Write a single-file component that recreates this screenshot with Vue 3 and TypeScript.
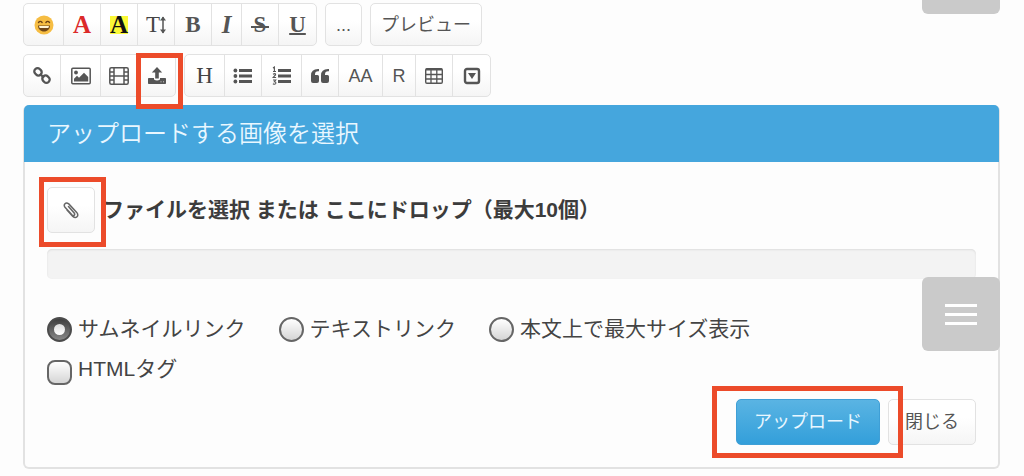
<script setup lang="ts">
import { ref } from 'vue'

type Size = 'slim' | 'small' | 'mid' | 'large' | 'wide'

interface Tool {
  id: string
  label: string
  size: Size
  text?: string
  marked?: boolean
}

const textTools: Tool[] = [
  { id: 'emoji', label: '絵文字', size: 'large' },
  { id: 'color', label: '文字色', size: 'mid', text: 'A' },
  { id: 'marker', label: '背景色', size: 'mid', text: 'A' },
  { id: 'size', label: '文字サイズ', size: 'mid', text: 'T' },
  { id: 'bold', label: '太字', size: 'mid', text: 'B' },
  { id: 'italic', label: '斜体', size: 'slim', text: 'I' },
  { id: 'strike', label: '取り消し線', size: 'mid', text: 'S' },
  { id: 'underline', label: '下線', size: 'mid', text: 'U' },
]

const insertTools: Tool[] = [
  { id: 'link', label: 'リンク', size: 'mid' },
  { id: 'image', label: '画像', size: 'large' },
  { id: 'film', label: '動画', size: 'mid' },
  { id: 'upload', label: 'アップロード', size: 'mid', marked: true },
]

const blockTools: Tool[] = [
  { id: 'heading', label: '見出し', size: 'large', text: 'H' },
  { id: 'list', label: 'リスト', size: 'mid' },
  { id: 'numbers', label: '番号付きリスト', size: 'large' },
  { id: 'quote', label: '引用', size: 'mid' },
  { id: 'aa', label: 'アスキーアート', size: 'wide', text: 'AA' },
  { id: 'ruby', label: 'ルビ', size: 'small', text: 'R' },
  { id: 'table', label: '表', size: 'mid' },
  { id: 'fold', label: '折りたたみ', size: 'mid' },
]

const rows = [[textTools], [insertTools, blockTools]]

const modes = [
  { value: 'thumb', label: 'サムネイルリンク' },
  { value: 'text', label: 'テキストリンク' },
  { value: 'full', label: '本文上で最大サイズ表示' },
]

const mode = ref('thumb')
const htmlTag = ref(false)
</script>

<template>
  <main class="page">
    <div class="toolbars">
      <div v-for="(row, r) in rows" :key="r" class="toolbar">
        <div v-for="(group, g) in row" :key="g" class="group">
          <button
            v-for="tool in group"
            :key="tool.id"
            type="button"
            class="tool"
            :class="[tool.size, tool.id]"
            :aria-label="tool.label"
          >
            <span v-if="tool.text" class="glyph">{{ tool.text }}</span>
            <svg v-if="tool.id === 'size'" class="arrow" viewBox="0 0 6 18" aria-hidden="true">
              <path d="M3 1v16" stroke="#555" stroke-width="1.5" />
              <path d="M0 4.5L3 .5l3 4zM0 13.5l3 4 3-4z" fill="#555" />
            </svg>
            <svg v-else-if="tool.id === 'emoji'" class="icon" viewBox="0 0 20 20" aria-hidden="true">
              <circle cx="10" cy="10" r="9.5" fill="#f6bd43" />
              <path d="M4.5 7.5q1.8-2.3 3.6 0M11.9 7.5q1.8-2.3 3.6 0" fill="none" stroke="#6b4217" stroke-width="1.4" stroke-linecap="round" />
              <path d="M4 10.5h12c0 3.6-2.6 6-6 6s-6-2.4-6-6z" fill="#704719" />
              <path d="M5 11h10l-.6 2H5.6z" fill="#fff3d5" />
            </svg>
            <svg v-else-if="tool.id === 'link'" class="icon" viewBox="0 0 20 20" aria-hidden="true">
              <g fill="none" stroke="#555" stroke-width="2.3">
                <rect x="2.2" y="2.6" width="7.6" height="6.4" rx="3" transform="rotate(45 6 5.8)" />
                <rect x="10.2" y="10" width="7.6" height="6.4" rx="3" transform="rotate(45 14 13.2)" />
                <path d="M8 8l4 3.6" />
              </g>
            </svg>
            <svg v-else-if="tool.id === 'image'" class="icon" viewBox="0 0 20 20" aria-hidden="true">
              <rect x="0.8" y="2.3" width="18.4" height="15.4" rx="1" fill="none" stroke="#555" stroke-width="1.5" />
              <circle cx="5" cy="6.5" r="1.9" fill="#555" />
              <path d="M3 15.5v-2.7l3-3 2 2 5-5 4.2 4.2v4.5z" fill="#555" />
            </svg>
            <svg v-else-if="tool.id === 'film'" class="icon" viewBox="0 0 20 20" aria-hidden="true">
              <g fill="none" stroke="#555" stroke-width="1.5">
                <rect x="0.8" y="1.8" width="18.4" height="16.4" rx="1.5" />
                <path d="M5 2v16M15 2v16M5 10h10M1 6h4M1 10h4M1 14h4M15 6h4M15 10h4M15 14h4" />
              </g>
            </svg>
            <svg v-else-if="tool.id === 'upload'" class="icon" viewBox="0 0 20 20" aria-hidden="true">
              <path d="M10 1l5.2 5.5h-3.4v6H8.2v-6H4.8z" fill="#555" />
              <path d="M1.8 12H7v1.6q3 1.8 6 0V12h5.2q.8 0 .8.8v4.4q0 .8-.8.8H1.8q-.8 0-.8-.8v-4.4q0-.8.8-.8z" fill="#555" />
              <path d="M13.5 15.8h1M16 15.8h1" stroke="#ccc" stroke-width="1" />
            </svg>
            <svg v-else-if="tool.id === 'list'" class="icon" viewBox="0 0 20 20" aria-hidden="true">
              <path d="M6 4.5h13M6 10h13M6 15.5h13" stroke="#555" stroke-width="2.8" />
              <g fill="#555"><circle cx="2.4" cy="4.5" r="1.9" /><circle cx="2.4" cy="10" r="1.9" /><circle cx="2.4" cy="15.5" r="1.9" /></g>
            </svg>
            <svg v-else-if="tool.id === 'numbers'" class="icon" viewBox="0 0 20 20" aria-hidden="true">
              <path d="M6 4.5h13M6 10h13M6 15.5h13" stroke="#555" stroke-width="2.8" />
              <path d="M1 2l1.4-1v4.5M1 5.5h3M1 8.3q2.6-1.6 2.6.4L1.2 11.5h2.9M1 14h2.7l-1.4 1.7q2 .2 1.4 1.8-.8 1.3-2.8.3" fill="none" stroke="#555" stroke-width="1.1" />
            </svg>
            <svg v-else-if="tool.id === 'quote'" class="icon" viewBox="0 0 20 20" aria-hidden="true">
              <path d="M9 3v2.2H8q-3 0-3 3V9h2.5Q9 9 9 10.5V15q0 2-2 2H3q-2 0-2-2V9.5Q1 3 8 3z" fill="#555" />
              <path d="M19 3v2.2h-1q-3 0-3 3V9h2.5Q19 9 19 10.5V15q0 2-2 2h-4q-2 0-2-2V9.5Q11 3 18 3z" fill="#555" />
            </svg>
            <svg v-else-if="tool.id === 'table'" class="icon" viewBox="0 0 20 20" aria-hidden="true">
              <rect x="1.7" y="2.7" width="16.6" height="14.6" rx="1.2" fill="none" stroke="#555" stroke-width="1.4" />
              <path d="M2 3.5h16" stroke="#555" stroke-width="2" />
              <path d="M2 8.5h16M2 13h16M7 4v13M12.8 4v13" stroke="#555" stroke-width="1.3" />
            </svg>
            <svg v-else-if="tool.id === 'fold'" class="icon" viewBox="0 0 20 20" aria-hidden="true">
              <rect x="3" y="3" width="14" height="14" rx="2" fill="none" stroke="#555" stroke-width="2.4" />
              <path d="M6 7h8l-4 6z" fill="#555" />
            </svg>
            <span v-if="tool.marked" class="mark mark-tool"></span>
          </button>
        </div>
        <template v-if="r === 0">
          <button type="button" class="button more">...</button>
          <button type="button" class="button preview">プレビュー</button>
        </template>
      </div>
    </div>

    <section class="panel">
      <h1 class="title">アップロードする画像を選択</h1>
      <div class="body">
        <div class="picker">
          <button type="button" class="button clip" aria-label="ファイルを選択">
            <svg class="clip-icon" viewBox="0 0 18 18" aria-hidden="true">
              <path d="M6.5 5.5l5.7 6.5q1 1.5 0 2.3t-2.1-.3L3 6.2Q1.5 4.2 3 2.7t3.8.2l7.9 8.5q2 2.6.3 4.3t-4.2-.2L5 9" fill="none" stroke="#666" stroke-width="1.5" stroke-linecap="round" />
            </svg>
            <span class="mark mark-clip"></span>
          </button>
          <strong class="drop">ファイルを選択 または ここにドロップ（最大10個）</strong>
        </div>
        <div class="progress" role="progressbar" aria-label="アップロードの進行状況" aria-valuenow="0"></div>
        <div class="options">
          <label v-for="item in modes" :key="item.value" class="option">
            <input v-model="mode" type="radio" name="mode" :value="item.value" class="radio" />
            <span>{{ item.label }}</span>
          </label>
        </div>
        <label class="option html">
          <input v-model="htmlTag" type="checkbox" class="check" />
          <span>HTMLタグ</span>
        </label>
        <div class="actions">
          <button type="button" class="button submit">
            アップロード
            <span class="mark mark-submit"></span>
          </button>
          <button type="button" class="button close">閉じる</button>
        </div>
      </div>
    </section>

    <button type="button" class="float float-top" aria-label="上へ"></button>
    <button type="button" class="float float-menu" aria-label="メニュー">
      <span class="bar"></span>
      <span class="bar"></span>
      <span class="bar"></span>
    </button>
  </main>
</template>

<style>
body {
  background: #fdfdfd;
}
</style>

<style scoped>
.page {
  position: relative;
  box-sizing: border-box;
  padding: 3px 24px 7px 23px;
  font-family: "Liberation Sans", "Noto Sans CJK JP", sans-serif;
  color: #444;
}

.page *,
.page *::before {
  box-sizing: border-box;
}

button {
  font: inherit;
  color: #555;
  padding: 0;
}

.toolbars {
  display: flex;
  flex-direction: column;
  gap: 8px;
}

.toolbar {
  display: flex;
  gap: 8px;
}

.group {
  display: flex;
  height: 43px;
  border: 1px solid #e2e2e2;
  border-radius: 5px;
  background: linear-gradient(#fff 40%, #f5f5f5);
}

.tool {
  position: relative;
  display: flex;
  align-items: center;
  justify-content: center;
  border: 0;
  border-right: 1px solid #e2e2e2;
  background: transparent;
  font-family: "Liberation Serif", serif;
  font-size: 25px;
  line-height: 28px;
}

.tool:last-child {
  border-right: 0;
}

.slim { width: 30px; }
.small { width: 33px; }
.mid { width: 37px; }
.large { width: 40px; }
.wide { width: 44px; }

.icon {
  width: 20px;
  height: 20px;
}

.arrow {
  width: 6px;
  height: 18px;
}

.color,
.marker,
.bold,
.italic,
.underline,
.strike {
  font-weight: bold;
}

.size,
.heading,
.strike,
.underline,
.bold {
  font-size: 23px;
}

.size,
.heading {
  color: #444;
}

.color {
  color: #dc2a2a;
}

.marker {
  color: #111;
}

.marker .glyph {
  background: #fbf836;
  height: 18px;
  line-height: 18px;
}

.italic {
  font-style: italic;
}

.strike .glyph {
  padding: 0 3px;
  background: linear-gradient(#555, #555) center 15px / 100% 2px no-repeat;
}

.underline .glyph {
  text-decoration: underline 2px;
}

.aa,
.ruby {
  font-family: "Liberation Sans", sans-serif;
  font-size: 18px;
}

.button {
  position: relative;
  border: 1px solid #e2e2e2;
  border-radius: 5px;
  background: linear-gradient(#fff 40%, #f5f5f5);
  font-size: 18px;
  line-height: 24px;
}

.more,
.preview {
  padding: 0 10px;
}

.mark {
  position: absolute;
  z-index: 2;
  border: 5px solid #ec4b2a;
  pointer-events: none;
}

.mark-tool {
  inset: -2px -8px -13px -2px;
}

.mark-clip {
  inset: -11px -12px -15px -9px;
}

.mark-submit {
  inset: -14px -24px -14px -25px;
}

.panel {
  margin-top: 8px;
  border: 2px solid #e2e2e2;
  border-top: 0;
  border-radius: 6px;
}

.title {
  margin: 0 -1px;
  padding: 11px 23px;
  border-radius: 5px 5px 0 0;
  background: #45a6dd;
  color: #e9f7ff;
  font-size: 24px;
  font-weight: 350;
  line-height: 35px;
}

.body {
  padding: 25px 22px 22px;
}

.picker {
  display: flex;
  align-items: center;
  gap: 8px;
}

.clip {
  display: flex;
  align-items: center;
  justify-content: center;
  width: 48px;
  height: 46px;
}

.clip-icon {
  width: 18px;
  height: 18px;
}

.drop {
  font-size: 21px;
  line-height: 32px;
  color: #3c3c3c;
}

.progress {
  height: 30px;
  margin-top: 16px;
  border-radius: 5px;
  background: #f3f3f3;
  box-shadow: inset 0 1px 2px #ddd;
}

.options {
  display: flex;
  flex-wrap: wrap;
  gap: 33px;
  margin-top: 34px;
}

.option {
  display: flex;
  align-items: center;
  gap: 6px;
  font-size: 21px;
  line-height: 32px;
}

.radio,
.check {
  appearance: none;
  display: grid;
  place-items: center;
  width: 25px;
  height: 25px;
  margin: 0;
  border: 2px solid #666;
  background: linear-gradient(#fff, #d5d5d5);
}

.radio {
  border-radius: 50%;
}

.check {
  align-self: flex-end;
  border-radius: 8px;
}

.radio:checked {
  border-color: #4c4c4c;
  background: linear-gradient(#3f3f3f, #888);
}

.radio:checked::before {
  content: "";
  width: 11px;
  height: 11px;
  border-radius: 50%;
  background: linear-gradient(#ddd, #fff);
}

.html {
  width: max-content;
  margin-top: 8px;
}

.actions {
  display: flex;
  justify-content: flex-end;
  gap: 8px;
  margin-top: 14px;
}

.actions .button {
  height: 46px;
  padding: 0 16px;
}

.actions .submit {
  padding: 0 17px;
  border-color: #3f9fd6;
  background: linear-gradient(#5ab4e3, #339fda);
  color: #e9f7ff;
}

.float {
  position: absolute;
  right: 24px;
  width: 78px;
  height: 74px;
  border: 0;
  border-radius: 6px;
  background: #cacaca;
}

.float-top {
  top: 0;
  height: 14px;
  border-radius: 0 0 6px 6px;
}

.float-menu {
  top: 277px;
  display: flex;
  flex-direction: column;
  align-items: center;
  justify-content: center;
  gap: 6px;
}

.bar {
  width: 32px;
  height: 3px;
  background: #fff;
}
</style>
